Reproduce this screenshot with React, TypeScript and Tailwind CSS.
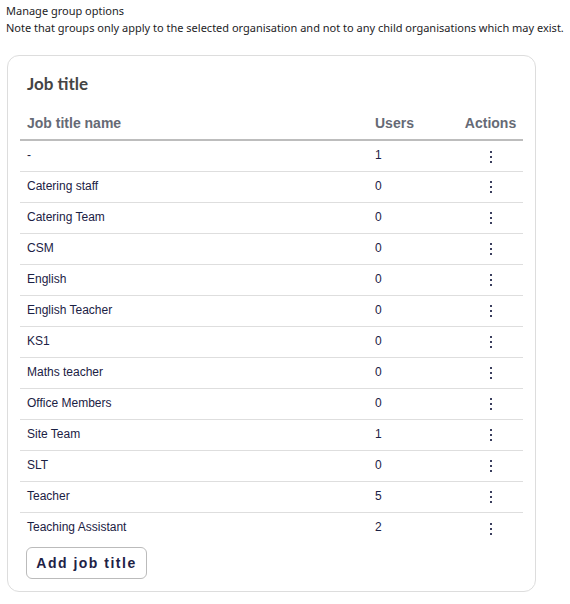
const rows: [string, number][] = [
  ['-', 1],
  ['Catering staff', 0],
  ['Catering Team', 0],
  ['CSM', 0],
  ['English', 0],
  ['English Teacher', 0],
  ['KS1', 0],
  ['Maths teacher', 0],
  ['Office Members', 0],
  ['Site Team', 1],
  ['SLT', 0],
  ['Teacher', 5],
  ['Teaching Assistant', 2],
];

const Dots = () => (
  <svg width="4" height="12" viewBox="0 0 4 12" className="inline-block">
    <rect x="1" y="0" width="2" height="2" fill="#3b3f5e" />
    <rect x="1" y="5" width="2" height="2" fill="#3b3f5e" />
    <rect x="1" y="10" width="2" height="2" fill="#3b3f5e" />
  </svg>
);

export default function App() {
  return (
    <div className="h-[604px] w-[570px] bg-white font-['Noto_Sans',sans-serif]">
      <div className="whitespace-nowrap px-[6px] pt-[2px] text-[11px] leading-[17px] text-[#1d1d1f]">
        <p>Manage group options</p>
        <p>Note that groups only apply to the selected organisation and not to any child organisations which may exist.</p>
      </div>
      <div className="mx-[7px] mt-[19px] h-[537px] w-[529px] rounded-[12px] border border-[#dddddd] px-[12px] pt-[15px]">
        <h2 className="px-[7px] text-[17px] font-bold leading-[26px] text-[#444444] font-['Lato',sans-serif]">
          Job title
        </h2>
        <table className="mt-[8px] w-full border-collapse font-['Liberation_Sans',Arial,sans-serif]">
          <thead>
            <tr className="h-[35px] border-b-2 border-[#bdbdbd] text-left text-[14px] font-bold text-[#666a75]">
              <th className="px-[7px] pt-[2px]">Job title name</th>
              <th className="w-[90px] px-[7px] pt-[2px]">Users</th>
              <th className="w-[65px] px-0 pt-[2px] text-center">Actions</th>
            </tr>
          </thead>
          <tbody className="text-[12px] text-[#1b2144]">
            {rows.map(([name, users], i) => (
              <tr
                key={name}
                className={i < rows.length - 1 ? 'h-[31px] border-b border-[#dedede]' : 'h-[31px]'}
              >
                <td className="px-[7px] pb-[1px]">{name}</td>
                <td className="px-[7px] pb-[1px]">{users}</td>
                <td className="text-center">
                  <Dots />
                </td>
              </tr>
            ))}
          </tbody>
        </table>
        <button className="ml-[6px] mt-[4px] h-[32px] w-[121px] rounded-[6px] border border-[#bbbbbb] bg-white text-[14px] font-bold tracking-[1.5px] text-[#1e2246] font-['Liberation_Sans',Arial,sans-serif]">
          Add job title
        </button>
      </div>
    </div>
  );
}
